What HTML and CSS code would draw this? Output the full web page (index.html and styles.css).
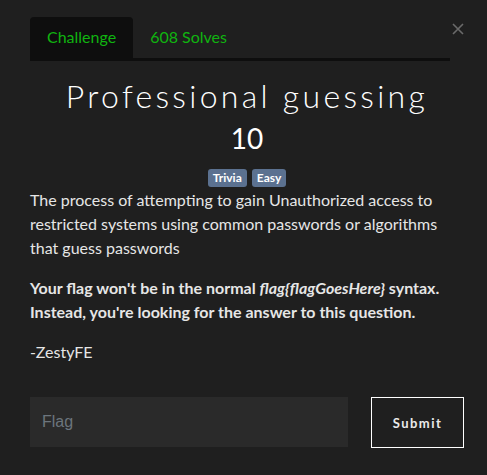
FILE: index.html
```html
<!DOCTYPE html>
<html>
<head>
<meta charset="utf-8">
<link rel="stylesheet" href="styles.css">
</head>
<body>
<div class="modal">
  <div class="header">
    <nav class="tabs">
      <a class="tab active">Challenge</a>
      <a class="tab">608 Solves</a>
    </nav>
    <button class="close" aria-label="Close">
      <svg width="12" height="12" viewBox="0 0 12 12"><path d="M1 1L11 11M11 1L1 11" stroke="#6a6a6a" stroke-width="1.6" fill="none"/></svg>
    </button>
  </div>
  <h1 class="title">Professional guessing</h1>
  <div class="value">10</div>
  <div class="tags">
    <span class="badge">Trivia</span>
    <span class="badge">Easy</span>
  </div>
  <div class="desc">
    <p>The process of attempting to gain Unauthorized access to restricted systems using common passwords or algorithms that guess passwords</p>
    <p class="strong">Your flag won't be in the normal <em>flag{flagGoesHere}</em> syntax. Instead, you're looking for the answer to this question.</p>
    <p>-ZestyFE</p>
  </div>
  <form class="submit-row">
    <input class="flag" type="text" placeholder="Flag">
    <button class="submit" type="button">Submit</button>
  </form>
</div>
</body>
</html>
```
FILE: styles.css
```css
html, body {
  margin: 0;
  padding: 0;
  background: #1f1f1f;
}
.modal {
  padding: 17px 23px 0 30px;
  font-family: Lato, "Open Sans", sans-serif;
  color: #e6e6e6;
}
.header {
  display: flex;
  align-items: flex-start;
}
.tabs {
  flex: 1;
  display: flex;
  border-bottom: 3px solid #0e0e0e;
  height: 41px;
}
.tab {
  display: block;
  padding: 0 17px;
  line-height: 40px;
  font-size: 16px;
  color: #10b410;
  border-radius: 4px 4px 0 0;
}
.tab.active {
  background: #0e0e0e;
}
.close {
  flex: 0 0 auto;
  width: 14px;
  height: 14px;
  margin: 5px 0 0;
  padding: 0;
  border: 0;
  background: none;
  display: flex;
  align-items: center;
  justify-content: center;
  transform: translateX(1px);
}
.title {
  margin: 15px 0 0;
  text-align: center;
  font-weight: 300;
  font-size: 32px;
  line-height: 40px;
  letter-spacing: 3.3px;
  color: #fff;
}
.value {
  margin-top: 3px;
  text-align: center;
  font-size: 28px;
  line-height: 38px;
  font-weight: 400;
  color: #fff;
}
.tags {
  display: flex;
  justify-content: center;
  gap: 5px;
  margin-top: 12px;
}
.badge {
  background: #5b7190;
  color: #fff;
  font-size: 12px;
  font-weight: 700;
  line-height: 18px;
  padding: 0 5px;
  border-radius: 3px;
}
.desc {
  margin-top: 1px;
  font-size: 16px;
  line-height: 24px;
  color: #e6e6e6;
  padding-right: 16px;
}
.desc p {
  margin: 0 0 16px;
}
.desc .strong {
  font-weight: 700;
}
.submit-row {
  display: flex;
  gap: 23px;
  margin-top: 33px;
}
.flag {
  width: 318px;
  height: 50px;
  box-sizing: border-box;
  border: 0;
  background: #2a2a2a;
  padding: 0 12px;
  font-family: "Liberation Sans", Arial, sans-serif;
  font-size: 16px;
  color: #fff;
  outline: none;
}
.flag::placeholder {
  color: #6c757d;
}
.submit {
  width: 93px;
  height: 51px;
  box-sizing: border-box;
  background: #1f1f1f;
  border: 1px solid #fff;
  color: #eaeaea;
  font-family: Lato, sans-serif;
  font-weight: 700;
  font-size: 13px;
  letter-spacing: 1.5px;
}
```
